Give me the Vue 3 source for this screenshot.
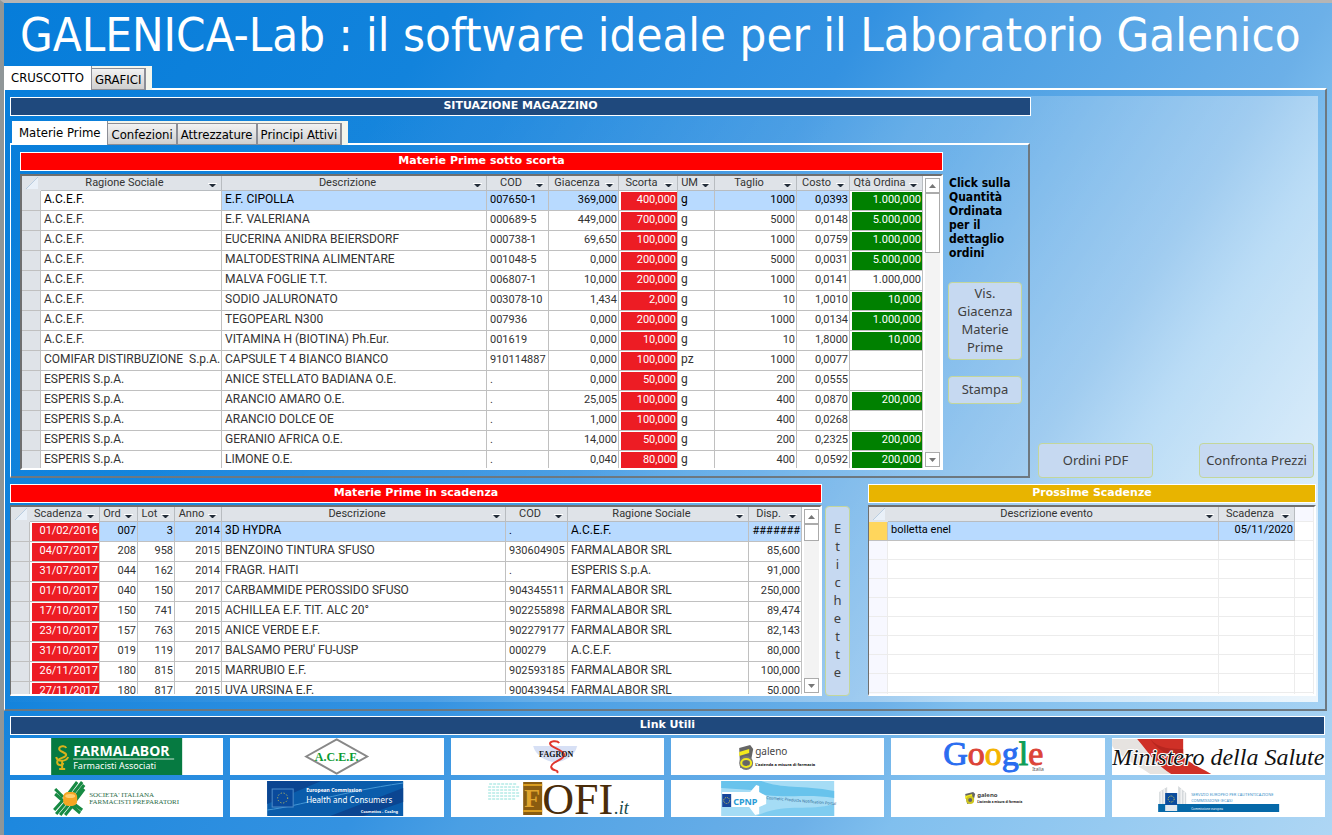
<template>
  <main class="app">
    <h1 class="title">GALENICA-Lab : il software ideale per il Laboratorio Galenico</h1>

    <div class="tabs" role="tablist">
      <button v-for="(tab, index) in mainTabs" :key="tab" type="button" role="tab" class="tab"
        :class="{ active: activeMain === index }" @click="activeMain = index">{{ tab }}</button>
    </div>

    <section class="panel">
      <div class="dashboard">
        <div class="top-row">
          <div class="stock">
            <h2 class="bar bar-navy">SITUAZIONE MAGAZZINO</h2>
            <div class="tabs tabs-inner" role="tablist">
              <button v-for="(tab, index) in stockTabs" :key="tab" type="button" role="tab" class="tab"
                :class="{ active: activeStock === index }" @click="activeStock = index">{{ tab }}</button>
            </div>
            <div class="stock-panel">
              <div class="stock-main">
                <h3 class="bar bar-red">Materie Prime sotto scorta</h3>
                <div class="sheet sheet-stock">
                  <table>
                    <colgroup>
                      <col v-for="(col, i) in stockCols" :key="i" :class="col.size">
                    </colgroup>
                    <thead>
                      <tr>
                        <th v-for="(col, i) in stockCols" :key="i">
                          <span v-if="col.label" class="head"><span>{{ col.label }}</span>
                            <svg class="arrow" viewBox="0 0 9 5"><path d="M0 0h9v1H0z" fill="#fff" /><path d="M1 1h7L5 4H4z" fill="#222c38" /></svg>
                          </span>
                          <svg v-else class="corner" viewBox="0 0 12 12"><path d="M12 0v12H0z" fill="#e9f0f8" /><path d="M12 0L0 12" stroke="#b9cde0" /></svg>
                        </th>
                      </tr>
                    </thead>
                    <tbody>
                      <tr v-for="(row, r) in stockRows" :key="r" :class="{ selected: r === 0 }">
                        <td class="selector"></td>
                        <td :class="{ current: r === 0 }">{{ row[0] }}</td>
                        <td>{{ row[1] }}</td>
                        <td class="code">{{ row[2] }}</td>
                        <td class="num">{{ row[3] }}</td>
                        <td class="num red">{{ row[4] }}</td>
                        <td>{{ row[5] }}</td>
                        <td class="num">{{ row[6] }}</td>
                        <td class="num">{{ row[7] }}</td>
                        <td class="num" :class="{ green: row[8] && r !== 4 }">{{ row[8] }}</td>
                      </tr>
                    </tbody>
                  </table>
                  <div class="scroll">
                    <button type="button" aria-label="Su"><svg viewBox="0 0 7 4"><path d="M0 4h7L3.500 0z" fill="#777" /></svg></button>
                    <div class="track"><div class="thumb thumb-long"></div></div>
                    <button type="button" aria-label="Giù"><svg viewBox="0 0 7 4"><path d="M0 0h7L3.500 4z" fill="#777" /></svg></button>
                  </div>
                </div>
              </div>
              <div class="stock-side">
                <p>Click sulla Quantità Ordinata per il dettaglio ordini</p>
                <button type="button" class="action">Vis. Giacenza Materie Prime</button>
                <button type="button" class="action">Stampa</button>
              </div>
            </div>
          </div>
          <div class="orders">
            <button type="button" class="action">Ordini PDF</button>
            <button type="button" class="action">Confronta Prezzi</button>
          </div>
        </div>

        <div class="bottom-row">
          <div>
            <h3 class="bar bar-red">Materie Prime in scadenza</h3>
            <div class="sheet sheet-short">
              <table>
                <colgroup>
                  <col v-for="(col, i) in expiryCols" :key="i" :class="col.size">
                </colgroup>
                <thead>
                  <tr>
                    <th v-for="(col, i) in expiryCols" :key="i">
                      <span v-if="col.label" class="head"><span>{{ col.label }}</span>
                        <svg class="arrow" viewBox="0 0 9 5"><path d="M0 0h9v1H0z" fill="#fff" /><path d="M1 1h7L5 4H4z" fill="#222c38" /></svg>
                      </span>
                      <svg v-else class="corner" viewBox="0 0 12 12"><path d="M12 0v12H0z" fill="#e9f0f8" /><path d="M12 0L0 12" stroke="#b9cde0" /></svg>
                    </th>
                  </tr>
                </thead>
                <tbody>
                  <tr v-for="(row, r) in expiryRows" :key="r" :class="{ selected: r === 0 }">
                    <td class="selector"></td>
                    <td class="num red">{{ row[0] }}</td>
                    <td class="num">{{ row[1] }}</td>
                    <td class="num">{{ row[2] }}</td>
                    <td class="num">{{ row[3] }}</td>
                    <td>{{ row[4] }}</td>
                    <td class="code">{{ row[5] }}</td>
                    <td>{{ row[6] }}</td>
                    <td class="num">{{ row[7] }}</td>
                  </tr>
                </tbody>
              </table>
              <div class="scroll">
                <button type="button" aria-label="Su"><svg viewBox="0 0 7 4"><path d="M0 4h7L3.500 0z" fill="#777" /></svg></button>
                <div class="track"><div class="thumb"></div></div>
                <button type="button" aria-label="Giù"><svg viewBox="0 0 7 4"><path d="M0 0h7L3.500 4z" fill="#777" /></svg></button>
              </div>
            </div>
          </div>
          <button type="button" class="action labels" aria-label="Etichette">
            <span v-for="(letter, i) in 'Etichette'" :key="i">{{ letter }}</span>
          </button>
          <div>
            <h3 class="bar bar-gold">Prossime Scadenze</h3>
            <div class="sheet sheet-short sheet-events">
              <table>
                <colgroup>
                  <col class="w19"><col><col class="w76"><col class="w19">
                </colgroup>
                <thead>
                  <tr>
                    <th><svg class="corner" viewBox="0 0 12 12"><path d="M12 0v12H0z" fill="#e9f0f8" /><path d="M12 0L0 12" stroke="#b9cde0" /></svg></th>
                    <th v-for="label in ['Descrizione evento', 'Scadenza']" :key="label">
                      <span class="head"><span>{{ label }}</span>
                        <svg class="arrow" viewBox="0 0 9 5"><path d="M0 0h9v1H0z" fill="#fff" /><path d="M1 1h7L5 4H4z" fill="#222c38" /></svg>
                      </span>
                    </th>
                    <th class="blank"></th>
                  </tr>
                </thead>
                <tbody>
                  <tr class="selected">
                    <td class="selector"></td>
                    <td class="code">bolletta enel</td>
                    <td class="num">05/11/2020</td>
                    <td class="blank"></td>
                  </tr>
                  <tr v-for="n in 9" :key="n" class="empty">
                    <td class="selector"></td><td></td><td></td><td></td>
                  </tr>
                </tbody>
              </table>
            </div>
          </div>
        </div>
      </div>
    </section>

    <footer>
      <h2 class="bar bar-navy">Link Utili</h2>
      <nav class="links">
        <!-- Farmalabor -->
        <a href="#">
          <svg viewBox="0 0 213 37">
            <rect x="41" width="131" height="37" fill="#067a41" />
            <g fill="none" stroke="#d9b31c" stroke-width="2">
              <path d="M56 10c-1-3-7-2-7 1s7 3 7 6-9 3-9 7 6 4 6 1" /><path d="M46 19c1 5 10 5 12 0M52 22v8M49 31h6" />
            </g>
            <text x="63" y="18" class="sans bold" font-size="14" fill="#fff">FARMALABOR</text>
            <path d="M63 21h101" stroke="#cfe3d5" />
            <text x="63" y="31" class="sans" font-size="9" fill="#fff">Farmacisti Associati</text>
          </svg>
        </a>
        <!-- ACEF -->
        <a href="#">
          <svg viewBox="0 0 213 37">
            <path d="M76 18.500L106.500 1.500L137 18.500L106.500 35.500z" fill="#fff" stroke="#888" stroke-width="2" />
            <text x="106.500" y="23" text-anchor="middle" class="serif bold" font-size="12" fill="#0a9a32">A.C.E.F.</text>
          </svg>
        </a>
        <!-- Fagron -->
        <a href="#">
          <svg viewBox="0 0 213 37">
            <path d="M82 8h44c-2 10-13 16-22 16S84 17 82 8z" fill="#d7e0f5" />
            <path d="M108 5c-2-3-10-2-9 1 1 4 14 6 14 11s-14 7-13 12 8 2 6 6" fill="none" stroke="#e0352c" stroke-width="2" />
            <text x="105" y="19" text-anchor="middle" class="serif bold" font-size="8" fill="#111">FAGRON</text>
          </svg>
        </a>
        <!-- Galeno -->
        <a href="#">
          <svg viewBox="0 0 213 37">
            <path d="M68 10l11-3 3 4-3 16-10 3z" fill="#666" /><path d="M68 14l10-3v4l-10 3z" fill="#f3ea1d" />
            <ellipse cx="75" cy="25" rx="5" ry="5" fill="none" stroke="#777" stroke-width="4" /><ellipse cx="75" cy="25" rx="5" ry="4" fill="none" stroke="#f3ea1d" stroke-width="2" />
            <text x="84" y="17" class="sans" font-size="10" fill="#444">galeno</text>
            <text x="84" y="28" class="sans bold" font-size="4" fill="#111">L'azienda a misura di farmacia</text>
          </svg>
        </a>
        <!-- Google Italia -->
        <a href="#">
          <svg viewBox="0 0 213 37">
            <text x="52" y="27" class="serif" font-size="34" stroke-width="1">
              <tspan fill="#2a6df0" stroke="#2a6df0">G</tspan><tspan fill="#dc4437" stroke="#dc4437">o</tspan><tspan fill="#f4b400" stroke="#f4b400">o</tspan><tspan fill="#2a6df0" stroke="#2a6df0">g</tspan><tspan fill="#0f9d58" stroke="#0f9d58">l</tspan><tspan fill="#dc4437" stroke="#dc4437">e</tspan>
            </text>
            <text x="141" y="33" class="sans" font-size="5" fill="#555">Italia</text>
          </svg>
        </a>
        <!-- Ministero della Salute -->
        <a href="#">
          <svg viewBox="0 0 213 37">
            <path d="M0 1h26l33 35H38C24 26 8 20 0 8z" fill="#e6e3e0" />
            <path d="M25 1h46v18c8 7 18 11 28 17H59C44 27 36 14 25 1z" fill="#cf3027" />
            <path d="M38 1c8 10 22 10 33 10v9C56 18 45 12 38 1z" fill="#b7261f" />
            <text x="106" y="27" text-anchor="middle" class="serif script outlined" font-size="24" fill="#111">Ministero della Salute</text>
          </svg>
        </a>
        <!-- Societa' Italiana Farmacisti Preparatori -->
        <a href="#">
          <svg viewBox="0 0 213 37">
            <g stroke="#178a43" stroke-width="3">
              <path d="M45 9l8 8M45 14l8 7M61 16L72 2M64 18L74 5M65 21l9-12M58 14l9-12M46 34l11-13M50 35l10-12M55 35l8-10M44 30l9-10M64 24l8 6M63 27l7 6" />
            </g>
            <rect x="53" y="12" width="14" height="14" rx="5" fill="#f5a623" /><ellipse cx="60" cy="16" rx="5" ry="2" fill="#ffcf70" />
            <text x="79" y="17" class="serif" font-size="7" fill="#2c6b48">SOCIETA' ITALIANA</text>
            <text x="79" y="24" class="serif" font-size="7" fill="#2c6b48">FARMACISTI PREPARATORI</text>
          </svg>
        </a>
        <!-- European Commission -->
        <a href="#">
          <svg viewBox="0 0 213 37">
            <rect x="37" y="1" width="136" height="35" fill="#0a5cab" />
            <path d="M37 1h54L37 24zM100 36L173 8v14l-40 14z" fill="#0b4591" />
            <path d="M37 30C70 26 110 12 173 3" stroke="#4497d6" fill="none" />
            <rect x="42" y="9" width="21" height="18" fill="#0a4a9c" stroke="#4f8cc9" />
            <circle cx="52.500" cy="18" r="5" fill="none" stroke="#d6cd52" stroke-dasharray="1 2" />
            <text x="76" y="12" class="sans bold" font-size="5" fill="#fff">European Commission</text>
            <text x="76" y="23" class="sans" font-size="8" fill="#fff">Health and Consumers</text>
            <text x="168" y="33" text-anchor="end" class="sans bold" font-size="4" fill="#fff">Cosmetics - CosIng</text>
          </svg>
        </a>
        <!-- FOFI -->
        <a href="#">
          <svg viewBox="0 0 213 37">
            <g stroke="#8fe0da" stroke-dasharray="3 1">
              <path d="M38 4h28M37 7h32M37 10h30M37 13h31M37 16h32M37 19h28" />
            </g>
            <rect x="72" y="2" width="19" height="33" fill="#8a5c10" /><path d="M72 5h19M72 31h19" stroke="#d99c1f" stroke-width="2" />
            <text x="73" y="27" class="serif bold" font-size="26" fill="#e0a52e">F</text>
            <text x="91" y="34" class="serif" font-size="44" fill="#4a2c0a">OFI</text>
            <text x="163" y="34" class="serif script" font-size="18" fill="#17484a">.it</text>
          </svg>
        </a>
        <!-- CPNP -->
        <a href="#">
          <svg viewBox="0 0 213 37">
            <rect x="50" y="1" width="113" height="35" fill="#a5dcf5" />
            <path d="M50 1h40c20 8 40 4 73 10v7C130 12 100 22 80 10L50 8z" fill="#68c3ec" /><path d="M85 36c30-14 50-4 78-12v12z" fill="#7fccf0" />
            <path d="M51 12h28l6-7 3 1v6l7 4v8l-7 3v7l-4 1-6-8H51z" fill="#fff" />
            <rect x="51" y="14" width="9" height="13" fill="#16479c" /><circle cx="55.500" cy="20.500" r="3" fill="none" stroke="#d6cd52" stroke-dasharray="1 1" />
            <text x="62" y="25" class="sans bold" font-size="9" fill="#2a9cd6">CPNP</text>
            <text x="95" y="19" class="sans" font-size="4" fill="#29628f" transform="rotate(5 95 19)">Cosmetic Products Notification Portal</text>
          </svg>
        </a>
        <!-- Galeno, small -->
        <a href="#">
          <svg viewBox="0 0 213 37">
            <path d="M74 14l8-2 2 2-2 8-6 2z" fill="#666" /><path d="M74 16l7-2v3l-7 2z" fill="#f3ea1d" />
            <circle cx="79" cy="20" r="3" fill="none" stroke="#cfc61d" stroke-width="2" />
            <text x="86" y="17" class="sans bold" font-size="6" fill="#444">galeno</text>
            <text x="86" y="23" class="sans bold" font-size="3" fill="#111">L'azienda a misura di farmacia</text>
          </svg>
        </a>
        <!-- ECAS -->
        <a href="#">
          <svg viewBox="0 0 213 37">
            <path d="M47 24V12l8-5v17zM66 24V6l8 7v11z" fill="#d5d9dc" /><path d="M49 24V11M52 24V9M69 24V9M72 24V12" stroke="#fff" />
            <rect x="46" y="24" width="121" height="8" fill="#0568a8" />
            <rect x="53" y="13" width="12" height="12" fill="#0b4c9e" /><circle cx="59" cy="19" r="3" fill="none" stroke="#d6cd52" stroke-dasharray="1 1" />
            <rect x="53" y="25" width="12" height="6" fill="#e3e8ee" />
            <text x="79" y="16" class="sans" font-size="4" fill="#3f93c9">SERVIZIO EUROPEO PER L'AUTENTICAZIONE</text>
            <text x="79" y="22" class="sans" font-size="4" fill="#3f93c9">COMMISSIONE (ECAS)</text>
            <text x="79" y="30" class="sans" font-size="3" fill="#fff">Commissione europea</text>
          </svg>
        </a>
      </nav>
    </footer>
  </main>
</template>

<script setup>
import { ref } from 'vue';

const mainTabs = ['CRUSCOTTO', 'GRAFICI'];
const stockTabs = ['Materie Prime', 'Confezioni', 'Attrezzature', 'Principi Attivi'];

const activeMain = ref(0);
const activeStock = ref(0);

// size is the class of the <col>, the column without one takes the free space
const stockCols = [
  { label: '', size: 'w19' },
  { label: 'Ragione Sociale', size: 'w181' },
  { label: 'Descrizione', size: '' },
  { label: 'COD', size: 'w62' },
  { label: 'Giacenza', size: 'w70' },
  { label: 'Scorta', size: 'w59' },
  { label: 'UM', size: 'w37' },
  { label: 'Taglio', size: 'w82' },
  { label: 'Costo', size: 'w53' },
  { label: 'Qtà Ordina', size: 'w73' },
];

const stockRows = [
  ['A.C.E.F.', 'E.F. CIPOLLA', '007650-1', '369,000', '400,000', 'g', '1000', '0,0393', '1.000,000'],
  ['A.C.E.F.', 'E.F. VALERIANA', '000689-5', '449,000', '700,000', 'g', '5000', '0,0148', '5.000,000'],
  ['A.C.E.F.', 'EUCERINA ANIDRA BEIERSDORF', '000738-1', '69,650', '100,000', 'g', '1000', '0,0759', '1.000,000'],
  ['A.C.E.F.', 'MALTODESTRINA ALIMENTARE', '001048-5', '0,000', '200,000', 'g', '5000', '0,0031', '5.000,000'],
  ['A.C.E.F.', 'MALVA FOGLIE T.T.', '006807-1', '10,000', '200,000', 'g', '1000', '0,0141', '1.000,000'],
  ['A.C.E.F.', 'SODIO JALURONATO', '003078-10', '1,434', '2,000', 'g', '10', '1,0010', '10,000'],
  ['A.C.E.F.', 'TEGOPEARL N300', '007936', '0,000', '200,000', 'g', '1000', '0,0134', '1.000,000'],
  ['A.C.E.F.', 'VITAMINA H (BIOTINA) Ph.Eur.', '001619', '0,000', '10,000', 'g', '10', '1,8000', '10,000'],
  ['COMIFAR DISTIRBUZIONE  S.p.A.', 'CAPSULE T 4 BIANCO BIANCO', '910114887', '0,000', '100,000', 'pz', '1000', '0,0077', ''],
  ['ESPERIS S.p.A.', 'ANICE STELLATO BADIANA O.E.', '.', '0,000', '50,000', 'g', '200', '0,0555', ''],
  ['ESPERIS S.p.A.', 'ARANCIO AMARO O.E.', '.', '25,005', '100,000', 'g', '400', '0,0870', '200,000'],
  ['ESPERIS S.p.A.', 'ARANCIO DOLCE OE', '.', '1,000', '100,000', 'g', '400', '0,0268', ''],
  ['ESPERIS S.p.A.', 'GERANIO AFRICA O.E.', '.', '14,000', '50,000', 'g', '200', '0,2325', '200,000'],
  ['ESPERIS S.p.A.', 'LIMONE O.E.', '.', '0,040', '80,000', 'g', '400', '0,0592', '200,000'],
];

const expiryCols = [
  { label: '', size: 'w19' },
  { label: 'Scadenza', size: 'w70' },
  { label: 'Ord', size: 'w38' },
  { label: 'Lot', size: 'w37' },
  { label: 'Anno', size: 'w47' },
  { label: 'Descrizione', size: '' },
  { label: 'COD', size: 'w62' },
  { label: 'Ragione Sociale', size: 'w181' },
  { label: 'Disp.', size: 'w53' },
];

const expiryRows = [
  ['01/02/2016', '007', '3', '2014', '3D HYDRA', '.', 'A.C.E.F.', '#######'],
  ['04/07/2017', '208', '958', '2015', 'BENZOINO TINTURA SFUSO', '930604905', 'FARMALABOR SRL', '85,600'],
  ['31/07/2017', '044', '162', '2014', 'FRAGR. HAITI', '.', 'ESPERIS S.p.A.', '91,000'],
  ['01/10/2017', '040', '150', '2017', 'CARBAMMIDE PEROSSIDO SFUSO', '904345511', 'FARMALABOR SRL', '250,000'],
  ['17/10/2017', '150', '741', '2015', 'ACHILLEA E.F. TIT. ALC 20°', '902255898', 'FARMALABOR SRL', '89,474'],
  ['23/10/2017', '157', '763', '2015', 'ANICE VERDE E.F.', '902279177', 'FARMALABOR SRL', '82,143'],
  ['31/10/2017', '019', '119', '2017', "BALSAMO PERU' FU-USP", '000279', 'A.C.E.F.', '80,000'],
  ['26/11/2017', '180', '815', '2015', 'MARRUBIO E.F.', '902593185', 'FARMALABOR SRL', '100,000'],
  ['27/11/2017', '180', '817', '2015', 'UVA URSINA E.F.', '900439454', 'FARMALABOR SRL', '50,000'],
];
</script>

<style>
body {
  margin: 0;
}
</style>

<style scoped>
* {
  box-sizing: border-box;
}

.app {
  min-height: 100vh;
  padding-right: 5px;
  border-top: 3px solid #b5b5b5;
  border-left: 4px solid #8f9698;
  background: linear-gradient(123deg, #067dda 0%, #1283dc 24%, #1e88de 29%, #3492e1 47%, #4a9fe4 53%, #6cb0e8 71%, #80bfee 76%, #aed6f4 100%);
  font-family: "DejaVu Sans Condensed", "DejaVu Sans", sans-serif;
  font-size: 12px;
  color: #000;
}

h1,
h2,
h3,
p {
  margin: 0;
}

button {
  font-family: inherit;
  font-size: inherit;
  color: inherit;
}

.title {
  height: 63px;
  padding-left: 16px;
  font-size: 47px;
  font-weight: normal;
  line-height: 63px;
  color: #fff;
  white-space: nowrap;
}

/* Tabs */
.tabs {
  display: flex;
  align-items: flex-end;
  width: max-content;
  height: 24px;
  padding-right: 6px;
  background: #f3f5ec;
  position: relative;
}

.tab {
  height: 22px;
  padding: 0 3px;
  border: 1px solid #8c8e96;
  border-right-width: 2px;
  border-left-width: 0;
  background: linear-gradient(#f2f2f2, #cfcfcf);
  font-size: 13px;
}

.tab.active {
  height: 24px;
  padding: 0 7px 2px;
  border: 0;
  border-right: 1px solid #8c8e96;
  background: #fff;
}

.tabs-inner {
  margin: 5px 0 0 2px;
}

/* Panels */
.panel {
  margin-top: -2px;
  padding: 6px 7px 7px 5px;
  border: 2px solid;
  border-width: 2px 2px 2px 1px;
  border-color: #fff #6d7880 #6d7880 #fff;
}

.dashboard {
  padding: 1px 2px 6px 0;
  background: linear-gradient(123deg, rgba(255, 255, 255, 0) 0%, rgba(255, 255, 255, 0.02) 30%, rgba(255, 255, 255, 0.18) 58%, rgba(255, 255, 255, 0.35) 73%, rgba(255, 255, 255, 0.8) 100%);
}

.top-row {
  display: grid;
  grid-template-columns: minmax(0, 1021fr) minmax(0, 285fr);
}

.stock-panel {
  display: flex;
  gap: 5px;
  margin: -2px 1px 0 0;
  padding: 7px 4px 6px 9px;
  border: 2px solid;
  border-width: 2px 2px 2px 1px;
  border-color: #fff #6d7880 #6d7880 #fff;
}

.stock-main {
  flex: 1;
  min-width: 0;
}

.stock-side {
  display: flex;
  flex-direction: column;
  width: 76px;
  padding-top: 24px;
  gap: 16px;
}

.stock-side p {
  height: 90px;
  padding-left: 1px;
  font-size: 12px;
  font-weight: bold;
  line-height: 14px;
}

.orders {
  display: flex;
  align-items: flex-end;
  justify-content: space-between;
  padding: 0 2px 0 7px;
}

.orders .action {
  width: 115px;
  height: 35px;
}

.bottom-row {
  display: grid;
  grid-template-columns: minmax(0, 812fr) 25px minmax(0, 463fr);
  column-gap: 3px;
  padding-top: 6px;
}

.bottom-row > div:last-child {
  margin-left: 15px;
}

/* Headings */
.bar {
  height: 19px;
  border: 1px solid #fff;
  font-family: "DejaVu Sans", sans-serif;
  font-size: 11px;
  font-weight: bold;
  line-height: 16px;
  text-align: center;
  color: #fff;
}

.bar-navy {
  background: #1f497d;
}

.bar-red {
  background: #f00;
}

.bar-gold {
  background: #e8b400;
}

/* Buttons */
.action {
  padding: 0 0 2px;
  border: 1px solid #c3d69b;
  border-radius: 4px;
  background: #c6d9f1;
  font-family: "Noto Sans", sans-serif;
  font-size: 13px;
  line-height: 18px;
  color: #404040;
}

.stock-side .action {
  width: 74px;
  padding: 1px 4px 3px;
}

.stock-side .action:last-child {
  height: 28px;
}

.labels {
  display: flex;
  flex-direction: column;
  align-items: center;
  margin-top: 22px;
  padding-top: 12px;
}

/* Data sheets */
.sheet {
  display: flex;
  overflow: hidden;
  margin-top: 2px;
  border: 2px solid;
  border-color: #6f6f6f #fff #fff #6f6f6f;
  background: #fff;
  font-family: Roboto, "Liberation Sans", sans-serif;
  font-size: 12px;
  color: #333;
}

.sheet-stock {
  height: 296px;
  margin-top: 3px;
}

.sheet-short {
  height: 191px;
  border-left-width: 1px;
}

table {
  flex: 1;
  width: 0;
  height: max-content;
  border-spacing: 0;
  table-layout: fixed;
}

.w19 { width: 19px; }
.w37 { width: 37px; }
.w38 { width: 38px; }
.w47 { width: 47px; }
.w53 { width: 53px; }
.w59 { width: 59px; }
.w62 { width: 62px; }
.w70 { width: 70px; }
.w73 { width: 73px; }
.w76 { width: 76px; }
.w82 { width: 82px; }
.w181 { width: 181px; }

th {
  height: 15px;
  padding: 0;
  border-right: 1px solid #b8bcc0;
  border-bottom: 1px solid #b8bcc0;
  background: #dfe3e8;
  font-size: 11px;
  font-weight: normal;
  line-height: 14px;
  white-space: nowrap;
}

th:first-child {
  border-color: #dfe3e8;
}

.head {
  display: flex;
  align-items: center;
  padding-right: 4px;
}

.head span {
  flex: 1;
  text-align: center;
}

.arrow {
  width: 9px;
  height: 5px;
  margin-top: 4px;
}

.corner {
  display: block;
  width: 12px;
  height: 12px;
  margin-left: 4px;
}

td {
  height: 20px;
  padding: 0 0 2px 3px;
  border-right: 1px solid #c0c0c0;
  border-bottom: 1px solid #c0c0c0;
  line-height: 17px;
  white-space: pre;
  overflow: hidden;
}

.code {
  font-size: 11px;
}

.num {
  padding-right: 1px;
  font-size: 11px;
  text-align: right;
}

.selected td {
  background: #b8daff;
  color: #000;
}

.selected .current {
  background: #fff;
}

.selector,
.selected .selector {
  background: #dfe3e8;
}

.red,
.selected .red {
  background: #ed1c24;
  box-shadow: inset 2px 1px #fff;
  color: #fff;
}

.green,
.selected .green {
  background: #008000;
  box-shadow: inset 2px 1px #fff;
  color: #fff;
}

.sheet-events td {
  height: 19px;
  line-height: 16px;
}

.sheet-events .selected .selector {
  background: #ffd65c;
}

.sheet-events .selected .blank {
  background: #fff;
}

.sheet-events .blank {
  border-color: #ececec;
  background: #f7f8ff;
}

.empty td {
  border-color: #ececec;
}

.empty .selector {
  background: #f7f8ff;
}

/* Scroll bars */
.scroll {
  display: flex;
  flex-direction: column;
  width: 15px;
  margin: 2px 1px 1px 2px;
}

.scroll button {
  display: flex;
  align-items: center;
  justify-content: center;
  height: 15px;
  padding: 0;
  border: 1px solid #ababab;
  background: #fff;
}

.scroll svg {
  width: 7px;
  height: 4px;
}

.track {
  flex: 1;
  background: #f3f3f3;
}

.thumb {
  height: 17px;
  border: 1px solid #ababab;
  background: #fff;
}

.thumb-long {
  height: 60px;
}

/* Links */
footer {
  padding: 5px 2px 0 6px;
}

.links {
  display: grid;
  grid-template-columns: repeat(6, minmax(0, 1fr));
  gap: 5px 7px;
  margin-top: 3px;
}

.links a {
  display: block;
  height: 37px;
  background: #fff;
}

.links svg {
  display: block;
  width: 100%;
  height: 37px;
}

.sans {
  font-family: "Noto Sans", sans-serif;
}

.serif {
  font-family: "Liberation Serif", serif;
}

.bold {
  font-weight: bold;
}

.script {
  font-style: italic;
}

.outlined {
  stroke: #fff;
  stroke-width: 2px;
  paint-order: stroke;
}
</style>
